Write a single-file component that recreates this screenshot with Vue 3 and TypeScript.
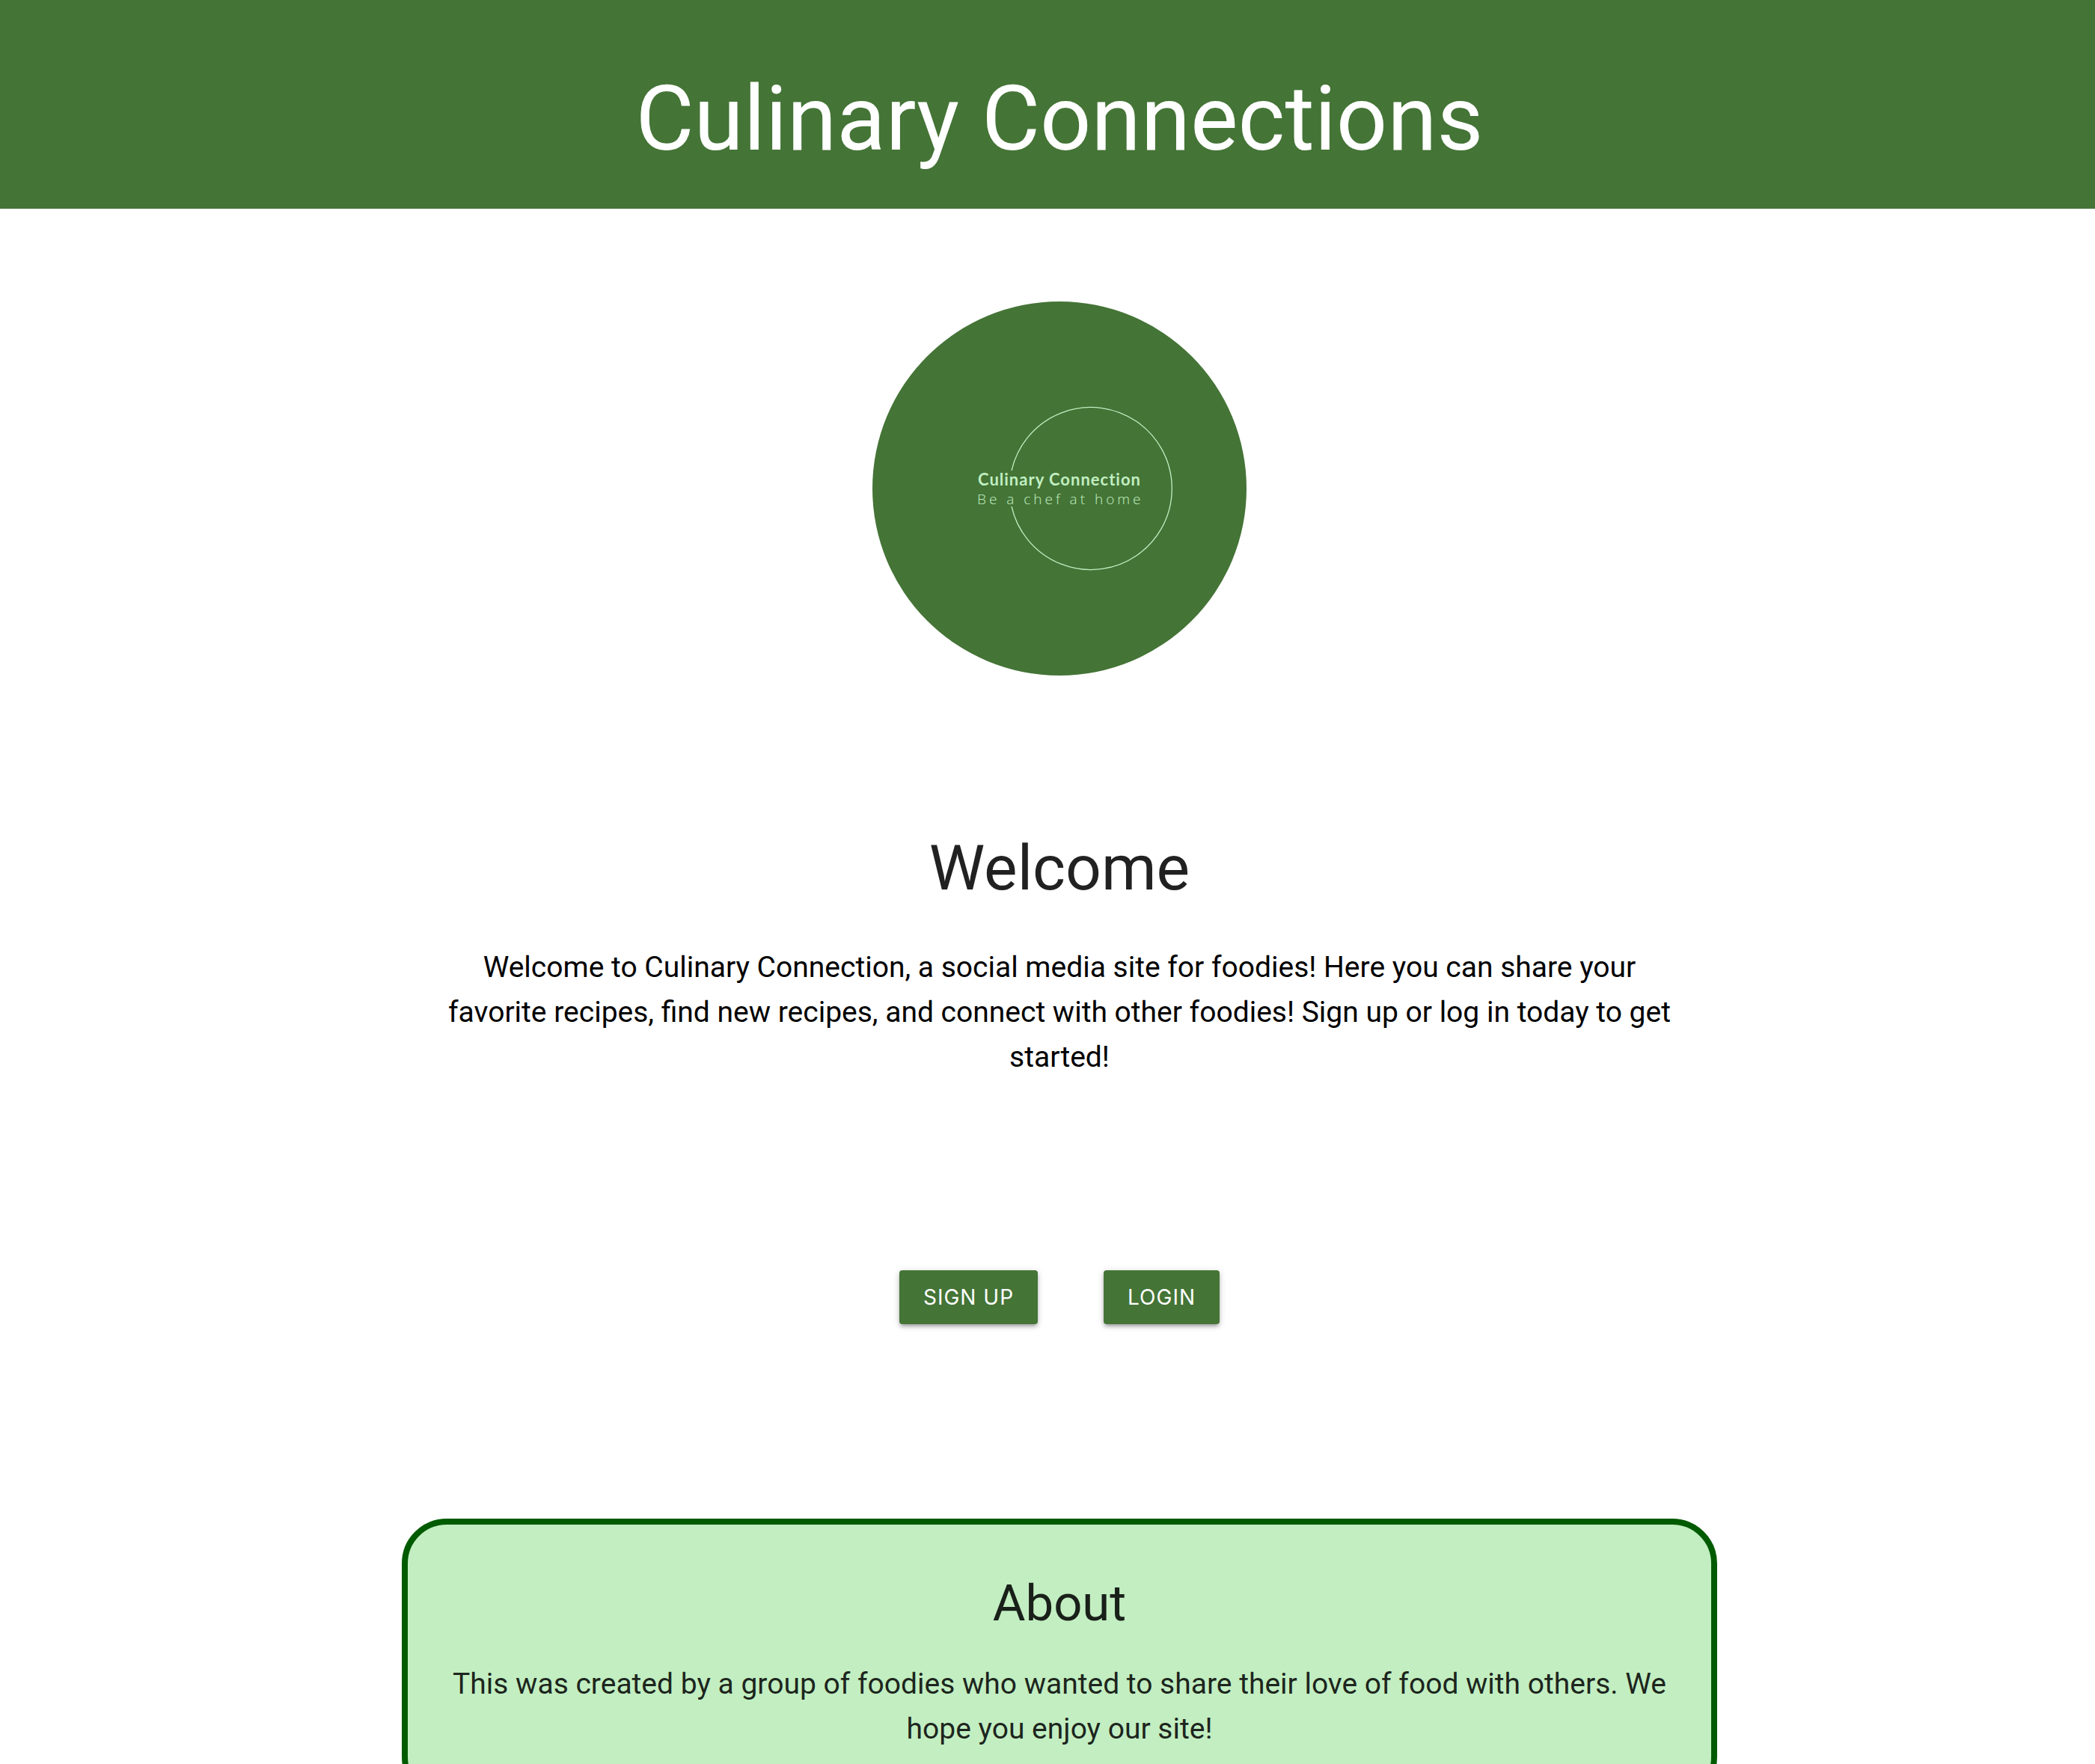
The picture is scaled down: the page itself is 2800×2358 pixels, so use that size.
<script setup lang="ts">
interface Action {
  label: string
}

const title = 'Culinary Connections'
const actions: Action[] = [{ label: 'Sign up' }, { label: 'Login' }]
</script>

<template>
  <div class="page">
    <header class="banner">
      <h1>{{ title }}</h1>
    </header>

    <main class="content">
      <svg class="logo" viewBox="0 0 500 500" role="img" aria-label="Culinary Connection logo">
        <circle cx="250" cy="250" r="250" fill="#447436" />
        <path
          d="M186 226 A108.5 108.5 0 1 1 186 274"
          fill="none"
          stroke="#c1eec1"
          stroke-width="1.3"
        />
        <text class="logo-name" x="141" y="246">Culinary Connection</text>
        <text class="logo-tag" x="140" y="271">Be a chef at home</text>
      </svg>

      <section class="welcome">
        <h2>Welcome</h2>
        <p>
          Welcome to Culinary Connection, a social media site for foodies! Here you can share your
          favorite recipes, find new recipes, and connect with other foodies! Sign up or log in
          today to get started!
        </p>
      </section>

      <nav class="actions" aria-label="Account">
        <button v-for="action in actions" :key="action.label" type="button">
          {{ action.label }}
        </button>
      </nav>

      <section class="about">
        <h3>About</h3>
        <p>
          This was created by a group of foodies who wanted to share their love of food with
          others. We hope you enjoy our site!
        </p>
      </section>
    </main>
  </div>
</template>

<style>
body {
  margin: 0;
  background: #fff;
}
</style>

<style scoped>
.page {
  font-family: Roboto, "Liberation Sans", sans-serif;
  color: rgba(0, 0, 0, 0.87);
  text-align: center;
}

h1,
h2,
h3,
p {
  margin: 0;
  font-weight: 400;
}

.banner {
  padding: 90px 0 50px 32px;
  background: #447436;
  color: #fff;
}

h1 {
  font-size: 120px;
  line-height: 139px;
}

.content {
  display: flex;
  flex-direction: column;
  align-items: center;
  padding: 124px 0 0 32px;
}

.logo {
  display: block;
  width: 500px;
  height: 500px;
}

.logo-name {
  font: 700 22px Lato, sans-serif;
  letter-spacing: 1px;
  fill: #c1eec1;
}

.logo-tag {
  font: 300 19px "Open Sans", sans-serif;
  letter-spacing: 4px;
  fill: #c1eec1;
}

.welcome,
.about {
  box-sizing: border-box;
  width: 64%;
  max-width: 1758px;
}

.welcome {
  padding: 0 40px;
  margin-top: 210px;
}

h2 {
  font-size: 84px;
  line-height: 96px;
}

p {
  font-size: 39px;
  line-height: 60px;
}

.welcome p {
  margin-top: 54px;
  color: #000;
}

.actions {
  display: flex;
  gap: 88px;
  margin-top: 255px;
}

button {
  height: 72px;
  padding: 0 32px;
  border: 0;
  border-radius: 4px;
  background: #447436;
  color: #fff;
  font: 400 28px Inter, "Liberation Sans", sans-serif;
  letter-spacing: 1px;
  text-transform: uppercase;
  box-shadow:
    0 4px 4px rgba(0, 0, 0, 0.14),
    0 6px 2px -4px rgba(0, 0, 0, 0.12),
    0 2px 10px rgba(0, 0, 0, 0.2);
}

.about {
  margin-top: 260px;
  padding: 65px 36px 60px;
  border: 8px solid #005b00;
  border-radius: 60px;
  background: #c2eec1;
}

h3 {
  font-size: 67px;
  line-height: 80px;
}

.about p {
  margin-top: 38px;
}
</style>
